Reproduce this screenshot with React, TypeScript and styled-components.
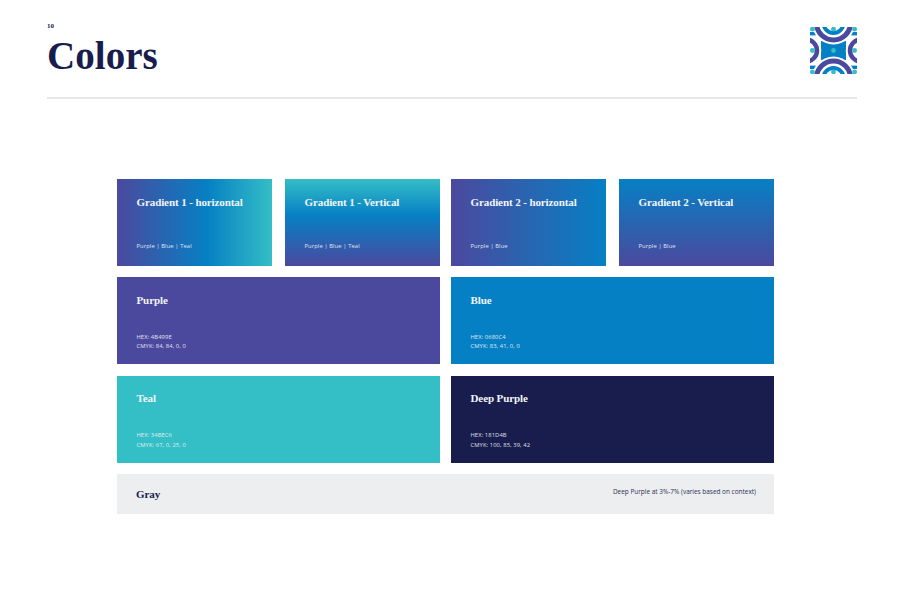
import React from "react";
import styled, { createGlobalStyle } from "styled-components";

const Global = createGlobalStyle`
  html, body { margin: 0; padding: 0; background: #fff; }
  body { width: 900px; height: 600px; overflow: hidden; }
`;

const serif = `"Liberation Serif", "DejaVu Serif", serif`;
const sans = `"Open Sans", "Noto Sans", sans-serif`;

const Page = styled.div`
  width: 900px;
  height: 600px;
  box-sizing: border-box;
  padding: 21px 43px 0 47px;
  display: flex;
  flex-direction: column;
`;

const Header = styled.header`
  display: flex;
  justify-content: space-between;
  align-items: flex-start;
  height: 76px;
  border-bottom: 2px solid #e7e8ea;
`;

const TitleBlock = styled.div`
  display: flex;
  flex-direction: column;
`;

const PageNum = styled.div`
  font: 700 7px/10px ${serif};
  color: #181d4d;
`;

const Title = styled.h1`
  margin: 3px 0 0;
  font: 700 39px/44px ${serif};
  letter-spacing: 0.05px;
  color: #181d4d;
`;

const Logo = styled.svg`
  width: 47px;
  height: 47px;
  margin-top: 6px;
  display: block;
`;

const Grid = styled.main`
  margin: 80px 0 0 70px;
  width: 657px;
  display: grid;
  grid-template-columns: 323px 323px;
  column-gap: 11px;
  row-gap: 11.33px;
  grid-template-rows: 87px 87px 87px 40px;
`;

const Pair = styled.div`
  display: grid;
  grid-template-columns: 155px 155px;
  column-gap: 13px;
`;

const Swatch = styled.section<{ $bg: string; $compact?: boolean }>`
  background: ${(p) => p.$bg};
  color: #f2f5fa;
  box-sizing: border-box;
  padding: 15.5px 18px ${(p) => (p.$compact ? 14 : 12.5)}px 19.5px;
  display: flex;
  flex-direction: column;
  justify-content: space-between;
`;

const Name = styled.h2`
  margin: 0;
  font: 700 11px/14px ${serif};
  letter-spacing: -0.1px;
`;

const Meta = styled.div`
  font: 400 5.8px/9.6px ${sans};
  letter-spacing: 0.1px;
  opacity: 0.9;
`;

const GrayBar = styled.section`
  grid-column: 1 / -1;
  background: #edeef0;
  box-sizing: border-box;
  padding: 0 18px 0 19px;
  display: flex;
  justify-content: space-between;
  align-items: center;
  color: #181d4d;
`;

const GrayNote = styled.div`
  font: 400 6.45px/10px ${sans};
  margin-top: -4px;
  color: #2c3057;
`;

const purple = "#4b499e";
const blue = "#0680c4";
const teal = "#34bec6";

const Arcs = () => (
  <Logo viewBox="0 0 47 47">
    <defs>
      <clipPath id="logoClip">
        <rect width="47" height="47" />
      </clipPath>
    </defs>
    <g clipPath="url(#logoClip)">
      <rect x="0" y="5" width="47" height="3.4" fill={blue} />
      <rect x="0" y="38.6" width="47" height="3.4" fill={blue} />
      <rect x="11" y="14" width="25" height="19" fill={blue} />
      {[
        [23.5, -4, 17, 5, 10, 4],
        [23.5, 51, 17, 5, 10, 4],
        [-4, 23.5, 11, 4.5, 0, 0],
        [51, 23.5, 11, 4.5, 0, 0],
      ].map(([cx, cy, r, w, ir, iw]) => (
        <g key={`${cx}-${cy}`}>
          <circle cx={cx} cy={cy} r={r + w / 2 + 2} fill="#fff" />
          <circle cx={cx} cy={cy} r={r} fill="none" stroke={purple} strokeWidth={w} />
          {ir > 0 && <circle cx={cx} cy={cy} r={ir} fill="none" stroke={blue} strokeWidth={iw} />}
        </g>
      ))}
      {[
        [2.4, 2.2],
        [23.5, 2.2],
        [44.6, 2.2],
        [2.4, 23.5],
        [23.5, 23.5],
        [44.6, 23.5],
        [2.4, 44.8],
        [23.5, 44.8],
        [44.6, 44.8],
      ].map(([cx, cy]) => (
        <circle key={`${cx}-${cy}`} cx={cx} cy={cy} r="2.4" fill={teal} />
      ))}
    </g>
  </Logo>
);

const Card = ({ s, compact }: { s: { name: string; bg: string; meta: string[] }; compact?: boolean }) => (
  <Swatch $bg={s.bg} $compact={compact}>
    <Name>{s.name}</Name>
    <Meta>
      {s.meta.map((line) => (
        <div key={line}>{line}</div>
      ))}
    </Meta>
  </Swatch>
);

const gradientsA = [
  { name: "Gradient 1 - horizontal", bg: "linear-gradient(90deg,#4b499e 0%,#0680c4 58%,#34bec6 100%)", meta: ["Purple | Blue | Teal"] },
  { name: "Gradient 1 - Vertical", bg: "linear-gradient(0deg,#4b499e 0%,#0680c4 58%,#34bec6 100%)", meta: ["Purple | Blue | Teal"] },
];
const gradientsB = [
  { name: "Gradient 2 - horizontal", bg: "linear-gradient(90deg,#4b499e 0%,#0680c4 100%)", meta: ["Purple | Blue"] },
  { name: "Gradient 2 - Vertical", bg: "linear-gradient(0deg,#4b499e 0%,#0680c4 100%)", meta: ["Purple | Blue"] },
];
const solids = [
  { name: "Purple", bg: "#4b499e", meta: ["HEX: 4B499E", "CMYK: 84, 84, 0, 0"] },
  { name: "Blue", bg: "#0680c4", meta: ["HEX: 0680C4", "CMYK: 83, 41, 0, 0"] },
  { name: "Teal", bg: "#34bec6", meta: ["HEX: 34BEC6", "CMYK: 67, 0, 25, 0"] },
  { name: "Deep Purple", bg: "#181d4d", meta: ["HEX: 181D4B", "CMYK: 100, 85, 39, 42"] },
];

export default function App() {
  return (
    <Page>
      <Global />
      <Header>
        <TitleBlock>
          <PageNum>10</PageNum>
          <Title>Colors</Title>
        </TitleBlock>
        <Arcs />
      </Header>
      <Grid>
        <Pair>
          {gradientsA.map((s) => (
            <Card key={s.name} s={s} compact />
          ))}
        </Pair>
        <Pair>
          {gradientsB.map((s) => (
            <Card key={s.name} s={s} compact />
          ))}
        </Pair>
        {solids.map((s) => (
          <Card key={s.name} s={s} />
        ))}
        <GrayBar>
          <Name>Gray</Name>
          <GrayNote>Deep Purple at 3%-7% (varies based on context)</GrayNote>
        </GrayBar>
      </Grid>
    </Page>
  );
}
